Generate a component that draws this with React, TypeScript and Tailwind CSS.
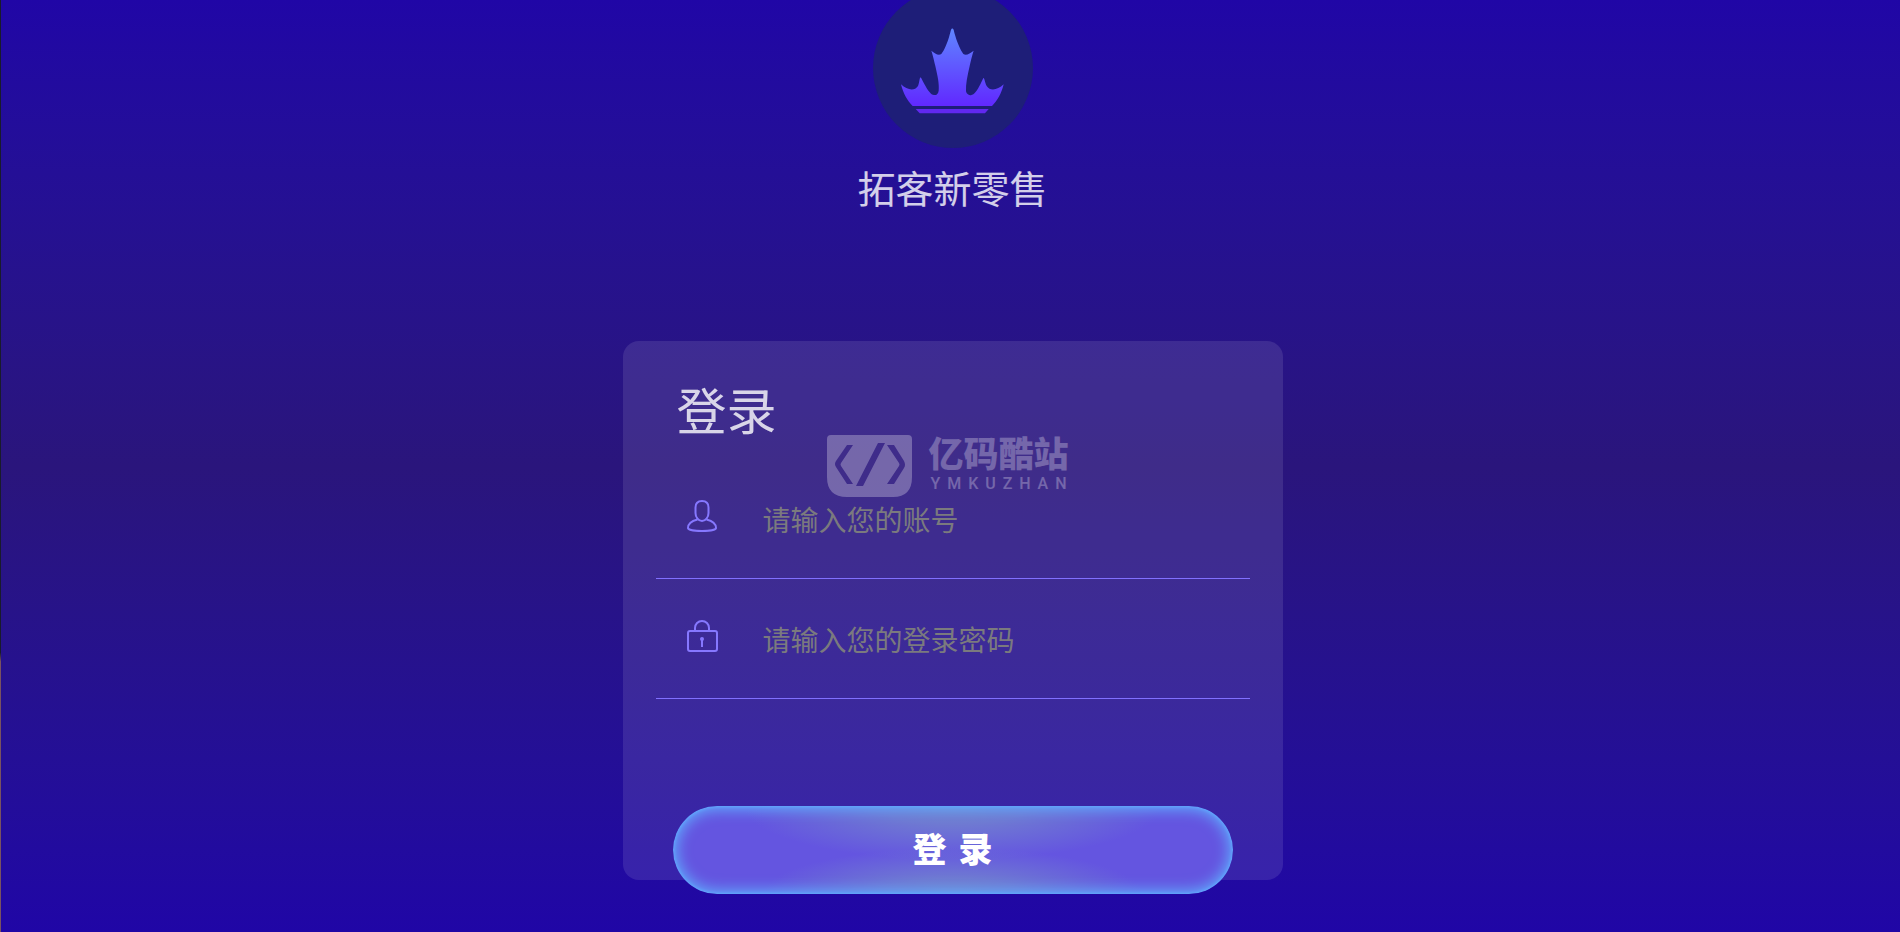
import { useState } from 'react';
import type { ReactNode } from 'react';

interface LoginFieldProps {
  id: string;
  type: string;
  label: string;
  value: string;
  onChange: (value: string) => void;
  icon: ReactNode;
}

function MapleLogo() {
  return (
    <div className="-mt-3 h-40 w-40 rounded-full bg-[#1e1e78]">
      <svg viewBox="100 -36 480 480" className="h-full w-full">
        <defs>
          <linearGradient id="leaf" x1="0" y1="0" x2="0" y2="1">
            <stop offset="0" stopColor="#5f86ff" />
            <stop offset="1" stopColor="#6128ff" />
          </linearGradient>
        </defs>
        <path
          fill="url(#leaf)"
          d="M338 86 C342 84 343 96 347 108 C354 132 364 152 371 162 C380 168 390 161 402 152 C398 164 395 176 390 198 C383 228 378 252 379 274 C382 286 392 289 403 281 C415 271 424 248 431 234 C435 234 435 246 441 258 C452 275 474 270 492 253 C485 281 474 301 457 318 L219 318 C202 301 191 281 184 253 C202 270 224 275 235 258 C240 246 239 234 243 232 C250 243 262 271 274 281 C285 289 295 286 297 272 C299 252 294 228 287 198 C282 176 279 164 275 152 C286 161 296 168 305 162 C313 152 322 132 329 108 C333 96 334 84 338 86 Z"
        />
        <path fill="#6128f0" d="M228 327 H447 L436 340 H240 Z" />
      </svg>
    </div>
  );
}

function UserIcon() {
  return (
    <svg viewBox="0 0 32 34" className="h-[34px] w-8" fill="none" stroke="#8678ff" strokeWidth="2">
      <path d="M9.5 8.5 C9.5 4 12 2 16 2 S22.5 4 22.5 8.5 V14 C22.5 18.5 19.5 22 16 22 S9.5 18.5 9.5 14 Z" />
      <path d="M11.5 20.5 C5.5 22 2 25 2 29 C2 31 9 32 16 32 S30 31 30 29 C30 25 26.5 22 20.5 20.5" />
    </svg>
  );
}

function LockIcon() {
  return (
    <svg viewBox="0 0 32 34" className="h-[34px] w-8" fill="none" stroke="#8678ff" strokeWidth="2">
      <rect x="2" y="12" width="29" height="20" rx="2" />
      <path d="M9 12 V9 A7 7 0 0 1 23 9 V12" />
      <circle cx="16" cy="20" r="2" fill="#8678ff" stroke="none" />
      <path d="M16 20 V28" />
    </svg>
  );
}

function LoginField({ id, type, label, value, onChange, icon }: LoginFieldProps) {
  return (
    <div className="flex h-[120px] items-center border-b border-[#8170ff]">
      <label htmlFor={id} aria-label={label} className="ml-[30px] pb-1.5">
        {icon}
      </label>
      <input
        id={id}
        type={type}
        value={value}
        placeholder={label}
        onChange={(e) => onChange(e.target.value)}
        className="ml-[45px] min-w-0 flex-1 bg-transparent text-[28px] leading-10 text-white/80 outline-none placeholder:text-[#7b7a7e]"
      />
    </div>
  );
}

// site watermark, floats over the middle of the window
function Watermark() {
  return (
    <div className="pointer-events-none absolute inset-0 flex items-center justify-center pr-1 opacity-28">
      <svg viewBox="0 0 85 62" className="h-[62px] w-[85px]">
        <path
          fill="#fff"
          fillRule="evenodd"
          d="M4 0 H81 Q85 0 85 4 V42 Q85 62 66 62 H20 Q0 62 0 42 V4 Q0 0 4 0 Z M20 10 L9 26 Q7 29 9 32 L20 49 H26 L14 31 Q13 29.5 14 28 L26 10 Z M51 8 L29 51 H36 L58 8 Z M60 10 L72 28 Q73 29.5 72 31 L60 49 H67 L77 33 Q79 30 77 26 L67 10 Z"
        />
      </svg>
      <div className="ml-4 text-white">
        <p className="text-[35px] leading-8 font-black">亿码酷站</p>
        <p className="mt-1 flex justify-between px-0.5 font-[Roboto] text-base leading-6 font-medium">
          {'YMKUZHAN'.split('').map((letter) => (
            <span key={letter}>{letter}</span>
          ))}
        </p>
      </div>
    </div>
  );
}

export default function App() {
  const [account, setAccount] = useState('');
  const [password, setPassword] = useState('');

  return (
    <div className="relative flex min-h-screen overflow-hidden bg-linear-to-b from-[#2006a6] via-[#2a157c] to-[#2006a6] font-['Noto_Sans_CJK_SC',sans-serif]">
      <div className="w-px bg-linear-to-b from-[#191b2c] from-70% to-[#795260] to-71%" />
      <main className="flex flex-1 flex-col items-center pl-1">
        <MapleLogo />
        <h1 className="mt-3 text-[38px] leading-[54px] text-white/80">拓客新零售</h1>
        <form
          onSubmit={(e) => e.preventDefault()}
          className="mt-[127px] h-[539px] w-full max-w-[660px] rounded-2xl bg-white/10 px-[33px] pt-8"
        >
          <h2 className="ml-[21px] text-[50px] leading-[70px] text-white/80">登录</h2>
          <div className="mt-4">
            <LoginField
              id="account"
              type="text"
              label="请输入您的账号"
              value={account}
              onChange={setAccount}
              icon={<UserIcon />}
            />
            <LoginField
              id="password"
              type="password"
              label="请输入您的登录密码"
              value={password}
              onChange={setPassword}
              icon={<LockIcon />}
            />
          </div>
          <div className="mt-[107px] px-[17px]">
            <button
              type="submit"
              className="h-[88px] w-full rounded-full bg-[#6455e0] bg-[radial-gradient(ellipse_210px_54px_at_50%_0%,#7284cc,#6f79d2_35%,#6455e000),radial-gradient(ellipse_190px_46px_at_50%_100%,#7284cc,#6f79d2_35%,#6455e000)] font-['DejaVu_Sans','Noto_Sans_CJK_SC',sans-serif] text-[34px] leading-12 font-black text-white shadow-[inset_0_0_14px_4px_#60a8fc,inset_0_0_3px_1px_#60a8fc]"
            >
              登 录
            </button>
          </div>
        </form>
      </main>
      <Watermark />
    </div>
  );
}
